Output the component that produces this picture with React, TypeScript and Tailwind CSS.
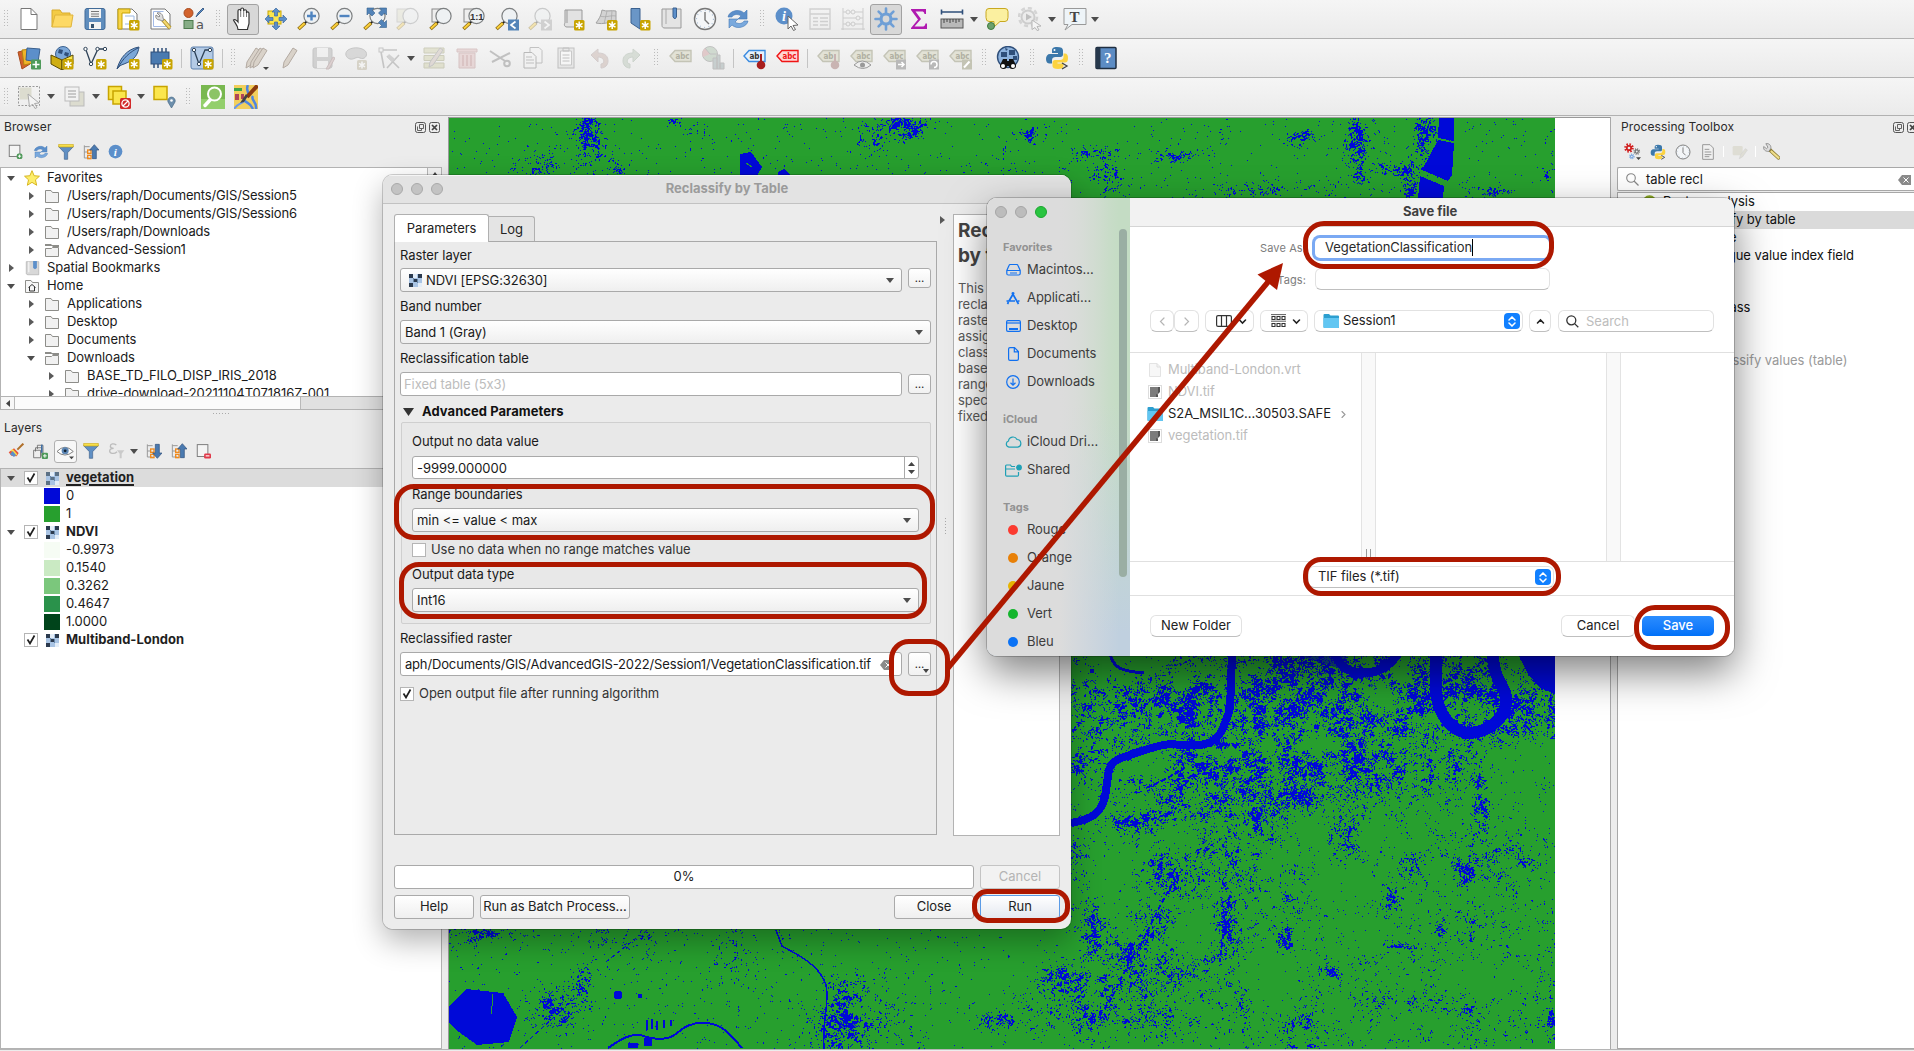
import React from "react";

/* ---------- small shared pieces ---------- */

type Kids = { children?: React.ReactNode };

const Svg = ({ children, s = 24, o = 1 }: Kids & { s?: number; o?: number }) => (
  <svg width={s} height={s} viewBox="0 0 24 24" fill="none" opacity={o} className="shrink-0">
    {children}
  </svg>
);

const Down = () => (
  <svg width="8" height="5" viewBox="0 0 8 5" className="shrink-0"><path d="M0 0h8L4 5z" fill="#4d4d4d" /></svg>
);
const RightTri = () => (
  <svg width="5" height="8" viewBox="0 0 5 8" className="shrink-0"><path d="M0 0v8l5-4z" fill="#5a5a5a" /></svg>
);

const NewBadge = () => (
  <g>
    <rect x="13" y="13" width="10.5" height="10.5" rx="1.5" fill="#c8a400" />
    <path d="M18.2 14.5v7.5M14.9 16.4l6.6 3.8M21.5 16.4l-6.6 3.8" stroke="#fff" strokeWidth="1.5" />
  </g>
);
const Lens = ({ children, fill = "#eef1f3" }: Kids & { fill?: string }) => (
  <g>
    <path d="M9.5 14.5L7.5 16.5" stroke="#222" strokeWidth="2" />
    <path d="M8 16l-6.5 6" stroke="#8a6a10" strokeWidth="3.6" />
    <path d="M7.7 16.3L2 21.6" stroke="#fcd03b" strokeWidth="2" />
    <circle cx="14.5" cy="9" r="7.6" fill={fill} stroke="#7c7f80" strokeWidth="1.2" />
    {children}
  </g>
);
const Refresh = ({ s = 24 }: { s?: number }) => (
  <Svg s={s}>
    <path d="M2 10c1-6 11-9 16-4l3-3v9h-9l3-3c-4-3-8-1-9 1z" fill="#5c8fca" stroke="#4478b5" strokeWidth=".6" />
    <path d="M22 14c-1 6-11 9-16 4l-3 3v-9h9l-3 3c4 3 8 1 9-1z" fill="#7aa9dd" stroke="#4478b5" strokeWidth=".6" />
  </Svg>
);
const Tag = ({ c = "#e2e2d6", b = "#c4c4b6", t = "#b0b0a2", children, text = "abc" }: Kids & { c?: string; b?: string; t?: string; text?: string }) => (
  <Svg>
    <path d="M2 10L7 4.500H23V15.500H7z" fill={c} stroke={b} strokeWidth="1.4" />
    <text x="7.500" y="13" fontSize="9" fontWeight="700" fill={t} fontFamily="DejaVu Sans" textLength={text.length > 2 ? 14 : 10} lengthAdjust="spacingAndGlyphs">{text}</text>
    {children}
  </Svg>
);
const Clock = ({ s = 24 }: { s?: number }) => (
  <Svg s={s}>
    <circle cx="12" cy="12" r="10.500" fill="#f4f6f8" stroke="#777" strokeWidth="1.4" />
    <path d="M12 5v8l4 4" stroke="#777" strokeWidth="1.4" />
    <circle cx="12" cy="12" r="8.500" stroke="#a9bdd3" strokeWidth="1.2" strokeDasharray="1 3.400" />
  </Svg>
);
const Python = ({ s = 24 }: { s?: number }) => (
  <Svg s={s}>
    <path d="M12 1c-4 0-5 1.500-5 3.500V7h6v1H5c-2.500 0-4 2-4 5s1.500 4.500 3.500 4.500H7V14c0-2 1.500-3 3.500-3h5c1.500 0 2.500-1 2.500-2.500v-4C18 2 16 1 12 1z" fill="#3c78aa" />
    <path d="M20 7.500h-1.500V11c0 2-1.500 3-3.500 3h-5C8.500 14 7.500 15 7.500 16.500V20c0 2 2 3 5.500 3s5.500-1 5.500-3v-2.500h-6v-1H20c2 0 3-1.500 3-4.500s-1-4.500-3-4.500z" fill="#fcd341" />
    <circle cx="9.500" cy="4" r="1" fill="#fff" />
    <path d="M17 17l5 3-5 3" stroke="#444" strokeWidth="1.300" />
  </Svg>
);
const GearShape = ({ x, y, r, c }: { x: number; y: number; r: number; c: string }) => (
  <g>
    <circle cx={x} cy={y} r={r} stroke={c} strokeWidth={r * 0.7} strokeDasharray={`${r * 0.4} ${r * 0.385}`} />
    <circle cx={x} cy={y} r={r * 0.62} stroke={c} strokeWidth={r * 0.5} />
  </g>
);
const Folder = () => (
  <svg width="14" height="13" viewBox="0 0 14 13" className="shrink-0">
    <path d="M.5 12.500V.5H6l1.500 2h6v10z" fill="#f1f1f1" stroke="#8d8d89" />
  </svg>
);
const FolderOpen = () => (
  <svg width="14" height="13" viewBox="0 0 14 13" className="shrink-0">
    <path d="M0 0h6l1 1h7v2H8L7 2H0z" fill="#8d8d89" />
    <path d="M.5 12.500V4.500H6.500l1-1h6v9z" fill="#f1f1f1" stroke="#8d8d89" />
  </svg>
);
const Raster = ({ dim = false }: { dim?: boolean }) => {
  const d = dim ? "#5b7085" : "#2b3a4e";
  return (
    <svg width="13" height="13" viewBox="0 0 13 13" className="shrink-0">
      <rect width="13" height="13" fill="#a9c4e4" />
      <path d="M0 0h4v4H0zM9 0h4v4H9zM5 5h3v3H5zM0 9h4v4H0z" fill={d} />
      <path d="M4 0h4v4H4zM9 9h4v4H9z" fill="#e3edf8" />
      <path d="M4 4h1v4H4zM8 5h1v4H8z" fill="#6a87a6" />
    </svg>
  );
};
const Check = ({ on = true }: { on?: boolean }) => (
  <span className="flex h-[14px] w-[14px] shrink-0 items-center justify-center border border-[#b5b5b5] bg-white">
    {on && <svg width="10" height="10" viewBox="0 0 10 10" fill="none"><path d="M1.500 4.500L4 8.500 8.500.5" stroke="#1f1f1f" strokeWidth="1.700" /></svg>}
  </span>
);

/* ---------- toolbar ---------- */

const Cell = ({ children, on = false }: Kids & { on?: boolean }) => (
  <div className="flex h-full w-[33px] shrink-0 items-center justify-center">
    {on ? <div className="flex h-[31px] w-[32px] shrink-0 items-center justify-center rounded-[3px] border border-[#a2a2a2] bg-[#d8d8d8]">{children}</div> : children}
  </div>
);
const Handle = ({ w = "w-[16px]" }: { w?: string }) => (
  <div className={`flex h-full shrink-0 items-center justify-center ${w}`}>
    <div className="h-[18px] w-[4px] bg-[repeating-linear-gradient(180deg,transparent_0_1px,#f0f0f0_1px_3px),repeating-linear-gradient(90deg,#bbb_0_1px,transparent_1px_3px)]" />
  </div>
);
const Sep = () => (
  <div className="flex h-full w-[8px] shrink-0 items-center justify-center"><div className="h-[19px] w-px bg-[#c4c4c4]" /></div>
);
const Arr = () => <div className="flex h-full w-[12px] shrink-0 items-center justify-center"><Down /></div>;
const bar = "flex h-[39px] shrink-0 items-center border-b border-[#b1b1b1] bg-gradient-to-b from-[#f5f5f5] to-[#ebebeb]";

const Pencil = ({ x = 0 }: { x?: number }) => (
  <path transform={`translate(${x} 0)`} d="M4 22l1-6L14 2l4 2.500L9 19z" fill="#d9d2c9" stroke="#b3aaa2" strokeWidth="1" />
);
const Needle = ({ c }: { c: string }) => (
  <g><path d="M19 8v10" stroke={c} strokeWidth="2" /><circle cx="19" cy="19" r="4.300" fill={c} /></g>
);

const RowOne = () => (
  <div className={bar}>
    <Handle w="w-[12px]" />
    <Cell><Svg><path d="M4 1.500h10l6 6v15H4z" fill="#fff" stroke="#777" /><path d="M14 1.500v6h6" stroke="#777" /></Svg></Cell>
    <Cell><Svg><path d="M2 20V3h8l2 3h8v4" fill="#f3cb45" stroke="#d9ab2c" /><path d="M2 20L5 8h18l-2 12z" fill="#fdd965" stroke="#e0b43a" /></Svg></Cell>
    <Cell><Svg><rect x="2" y="1.500" width="20" height="21" rx="2" fill="#5f8dbd" stroke="#426b98" /><path d="M6 2h12v9H6zM6 15h12v7H6z" fill="#f2f2f2" /><path d="M8 4.500h8M8 7h8M8 9.300h8" stroke="#777" /><path d="M8 17h3v4H8z" fill="#36536f" /></Svg></Cell>
    <Cell><Svg><path d="M2 2h14l5 5v15H2z" fill="#fff" stroke="#777" /><path d="M2 2h12v4H6v16H2z" fill="#f7d44a" stroke="#c8a400" /><path d="M9 9h9v8H9" stroke="#9bb8e0" /><NewBadge /></Svg></Cell>
    <Cell><Svg><path d="M2 2h14l5 5v15H2z" fill="#fff" stroke="#777" /><path d="M4.500 4.500h10M4.500 4.500v15h13" stroke="#a3bae6" /><path d="M14 13l7 8" stroke="#a98b25" strokeWidth="4" /><path d="M14 13l7 8" stroke="#f4d870" strokeWidth="2.400" /><path d="M8 6c3-1 6 1 6 5l1 2-2 1-2-1c-3 0-5-2-4-5l3 2 1-1z" fill="#ddd" stroke="#777" strokeWidth=".8" /></Svg></Cell>
    <Cell><Svg><circle cx="6.500" cy="6" r="4.500" fill="#d2622c" stroke="#a94a1d" /><path d="M14 10l2-4 5-5 1 1-5 5z" fill="#5c8fca" stroke="#42648d" /><rect x="2" y="13.500" width="9" height="8" fill="#86ad86" stroke="#4d7a4d" /><text x="14" y="22" fontSize="13" fill="#555" fontFamily="DejaVu Sans">a</text></Svg></Cell>
    <Handle />
    <Cell on><Svg><path d="M7 22.500c0-4-3-6-4.500-9.500 1-1 2.500-.5 4.500 2V4c0-2 2.500-2 2.700 0V2.500c.3-2 2.800-2 3 0V4c.3-1.700 2.600-1.700 2.800 0v2c.3-1.500 2.500-1.500 2.500.5V16c0 2.500-1.500 4-1.500 6.500z" fill="#fff" stroke="#333" strokeWidth="1.200" /><path d="M9.700 4v6M12.700 4v6M15.500 6v4" stroke="#555" strokeWidth=".8" /></Svg></Cell>
    <Cell><Svg><rect x="4" y="4" width="13" height="13" fill="#fbe64d" stroke="#c8a400" /><path d="M12 1l4 4h-2.500v4h-3V5H8zM12 23l4-4h-2.500v-4h-3v4H8zM1 12l4-4v2.500h4v3H5V16zM23 12l-4-4v2.500h-4v3h4V16z" fill="#5c8fca" stroke="#3e6a9e" strokeWidth=".7" /></Svg></Cell>
    <Cell><Svg><Lens><path d="M14.500 4.500v9M10 9h9" stroke="#4f84c0" strokeWidth="2.400" /></Lens></Svg></Cell>
    <Cell><Svg><Lens><path d="M9.500 9h10" stroke="#4f84c0" strokeWidth="2.400" /></Lens></Svg></Cell>
    <Cell><Svg><Lens /><path d="M4 1h7L9 3l3 3-3 3-3-3-2 2zM23.500 1v7l-2-2-3 3-3-3 3-3-2-2zM23.500 20.500h-7l2-2-3-3 3-3 3 3 2-2z" fill="#5283b8" stroke="#35618f" strokeWidth=".6" /></Svg></Cell>
    <Cell><Svg o={0.3}><rect x="1" y="2" width="13" height="13" fill="#dcdcc0" stroke="#999" /><Lens /></Svg></Cell>
    <Cell><Svg><rect x="3" y="2" width="13" height="13" fill="#eee" stroke="#888" /><Lens /></Svg></Cell>
    <Cell><Svg><rect x="2" y="2" width="13" height="13" fill="#eee" stroke="#888" /><Lens><text x="8" y="12.500" fontSize="9.500" fontWeight="700" fill="#333" fontFamily="Liberation Sans">1:1</text></Lens></Svg></Cell>
    <Cell><Svg><Lens /><rect x="13" y="12.500" width="11" height="11" fill="#5283b8" /><path d="M20.500 14.500l-4.500 3.500 4.500 3.500" stroke="#fff" strokeWidth="1.700" /></Svg></Cell>
    <Cell><Svg o={0.35}><Lens /><rect x="13" y="12.500" width="11" height="11" fill="#999" /><path d="M16.500 14.500l4.500 3.500-4.500 3.500" stroke="#fff" strokeWidth="1.700" /></Svg></Cell>
    <Cell><Svg><path d="M4 3h17v17H6c-3 0-3-3-2-4z" fill="#e2e2e2" stroke="#999" /><path d="M6 3v13" stroke="#999" /><NewBadge /></Svg></Cell>
    <Cell><Svg><path d="M8 3c5 2 9 0 14 1v12c-7-2-12 2-20 0C5 12 7 9 8 3z" fill="#d3d3d3" stroke="#a2a2a2" /><path d="M6 9c6 2 10-1 16 0M13 4l-3 13M18 4l-1 12" stroke="#aaa" strokeWidth=".8" /><NewBadge /></Svg></Cell>
    <Cell><Svg><path d="M4 1.500h9V22L4 16z" fill="#6a96c7" stroke="#3b618f" /><NewBadge /></Svg></Cell>
    <Cell><Svg><path d="M2 2h19v19H5c-3 0-3-2-3-3z" fill="#e4e4e4" stroke="#999" /><path d="M6 2v15" stroke="#aaa" /><path d="M13 1h3.500v9l-1.700 2-1.800-2z" fill="#5c8fca" stroke="#3b618f" /></Svg></Cell>
    <Cell><Clock /></Cell>
    <Cell><Refresh /></Cell>
    <Handle />
    <Cell><Svg><circle cx="9" cy="9" r="8.500" fill="#5c8fca" /><text x="7" y="14" fontSize="14" fontStyle="italic" fontWeight="700" fill="#fff" fontFamily="Liberation Serif">i</text><path d="M13 9l10 9-5 .5 2.500 4-2 1-2.500-4.500-3 3z" fill="#fff" stroke="#666" /></Svg></Cell>
    <Cell><Svg o={0.3}><path d="M2 2h20v20H2zM2 7h20M5 11h5M12 11h8M5 14.500h5M12 14.500h8M5 18h5M12 18h8" stroke="#888" strokeWidth="1.400" /></Svg></Cell>
    <Cell><Svg o={0.4}><path d="M2 1v22M22 1v22M2 5h20M2 11h20M2 17h20M0 22h24" stroke="#999" /><circle cx="7" cy="5" r="2" fill="#eee" stroke="#999" /><circle cx="12" cy="5" r="2" fill="#eee" stroke="#999" /><circle cx="17" cy="11" r="2" fill="#eee" stroke="#999" /><circle cx="7" cy="17" r="2" fill="#eee" stroke="#999" /><circle cx="12" cy="17" r="2" fill="#eee" stroke="#999" /></Svg></Cell>
    <Cell on><Svg><path d="M12 1.500V8M12 16v6.500M1.500 12H8M16 12h6.500M4.600 4.600L9 9M15 15l4.400 4.400M4.600 19.400L9 15M15 9l4.400-4.400" stroke="#6f9fd6" strokeWidth="2.600" strokeLinecap="round" /><circle cx="12" cy="12" r="5" fill="#d8d8d8" stroke="#6f9fd6" strokeWidth="3.200" /></Svg></Cell>
    <Cell><Svg><path d="M4 2h15v5h-1.500c-.5-2-1-2.500-3-2.500H8.500L14 12l-6.500 7.500H15c2 0 3-.5 3.500-3H20V22H4v-1l7-8.500L4 3z" fill="#b01ab0" /></Svg></Cell>
    <Cell><Svg><path d="M1 5h22M1.500 2.500v5M22.500 2.500v5" stroke="#2f4f7a" strokeWidth="1.600" /><rect x="1" y="12" width="22" height="9" fill="#b9b9b9" stroke="#555" /><path d="M4 12v4M7 12v3M10 12v4M13 12v3M16 12v4M19 12v3" stroke="#444" /></Svg></Cell>
    <Arr />
    <Cell><Svg><path d="M4 1.500h16q3 0 3 3v6q0 4-3 4h-5L9 20v-5.500H4q-3 0-3-4v-6q0-3 3-3z" fill="#fbf0a0" stroke="#c8a820" /><circle cx="6" cy="19" r="3.500" fill="#6ca06c" stroke="#3c7a3c" /></Svg></Cell>
    <Cell><Svg o={0.4}><circle cx="10" cy="10" r="9" stroke="#aaa" strokeWidth="2.500" strokeDasharray="4 3" /><circle cx="10" cy="10" r="6.500" fill="#e6e6e6" stroke="#999" strokeWidth="2" /><path d="M8 6.500l6 3.500-6 3.500z" fill="#777" /><path d="M14 13l9 6-4 .5 2 3.500-2 .5-2-3-3 2z" fill="#fff" stroke="#666" /></Svg></Cell>
    <Arr />
    <Cell><Svg><path d="M1 1.500h22v16H9L2 23l3-5.500H1z" fill="#eef4f8" stroke="#999" /><text x="6.500" y="14.500" fontSize="15" fontWeight="700" fill="#444" fontFamily="Liberation Serif">T</text></Svg></Cell>
    <div className="-ml-[2px] h-full"><Arr /></div>
  </div>
);

const RowTwo = () => (
  <div className={bar}>
    <Handle w="w-[12px]" />
    <Cell><Svg><path d="M1 6l9-2 3 14-8 5z" fill="#d2622c" stroke="#a94a1d" /><path d="M5 4l10-1 1 14-9 2z" fill="#f0b429" stroke="#b58510" /><path d="M10 2l13 1-2 13-12-2z" fill="#5c8fca" stroke="#3b618f" /><rect x="14" y="13.500" width="10" height="10" rx="1" fill="#4f9a5a" /><path d="M19 15v7M15.500 18.500h7" stroke="#fff" strokeWidth="1.600" /></Svg></Cell>
    <Cell><Svg><circle cx="13" cy="8" r="7.500" fill="#7ba7d8" stroke="#3b618f" /><path d="M9 3l4 1-1 4-4-1zM15 6l4 1-1 4-4-2z" fill="#2f4f7a" /><path d="M1 9l11 5v10L1 18z" fill="#cfae12" stroke="#5a4a00" /><path d="M12 14l11-5v9l-11 6z" fill="#fbe64d" stroke="#5a4a00" /><NewBadge /></Svg></Cell>
    <Cell><Svg><path d="M3 4l5 14L15 3h7" stroke="#2f4358" strokeWidth="1.300" /><g fill="#fff" stroke="#2f4358"><circle cx="2.500" cy="3" r="1.700" /><circle cx="14.500" cy="3" r="1.700" /><circle cx="22" cy="3" r="1.700" /><circle cx="8" cy="18" r="1.700" /></g><NewBadge /></Svg></Cell>
    <Cell><Svg><path d="M1 23C4 12 11 3 23 1c-1 7-4 13-15 17-3 1-5 2-7 5z" fill="#7ba7d8" stroke="#2f4f7a" /><path d="M2 22C7 12 14 6 22 2" stroke="#2f4f7a" /><NewBadge /></Svg></Cell>
    <Cell><Svg><rect x="2" y="6" width="18" height="12" fill="#4a7ab0" stroke="#2f4f7a" /><path d="M5 2v4M9 2v4M13 2v4M17 2v4M5 18v4M9 18v4" stroke="#2f4f7a" strokeWidth="1.500" /><NewBadge /></Svg></Cell>
    <Sep />
    <Cell><Svg><rect x="1" y="1" width="22" height="22" rx="2" fill="#b4cbe6" stroke="#5c80ad" /><path d="M4 4l5 14L15 4h5" stroke="#2f4358" strokeWidth="1.300" /><circle cx="9" cy="18" r="1.700" fill="#fff" stroke="#2f4358" /><circle cx="4" cy="4" r="1.700" fill="#fff" stroke="#2f4358" /><circle cx="20" cy="4" r="1.700" fill="#fff" stroke="#2f4358" /><NewBadge /></Svg></Cell>
    <Sep />
    <Handle w="w-[14px]" />
    <Cell><Svg><Pencil x={-3} /><Pencil x={1} /><Pencil x={4} /><path d="M18 21h6l-3 3z" fill="#444" /></Svg></Cell>
    <Cell><Svg><Pencil x={1} /></Svg></Cell>
    <Cell><Svg o={0.35}><rect x="2" y="2" width="19" height="20" rx="2" fill="#999" stroke="#777" /><path d="M6 2h11v9H6zM6 15h11v7H6z" fill="#eee" /><path d="M15 23l7-12 2 1-6 11z" fill="#b99" stroke="#866" /></Svg></Cell>
    <Cell><Svg o={0.35}><path d="M4 4c6-4 16-2 18 2s-2 8-6 6-6 2-10 1-6-6-2-9z" fill="#aaa" stroke="#777" /><rect x="13" y="14" width="10" height="10" rx="1.500" fill="#aaa080" /><path d="M18 15.500v7M15 17.300l6 3.500M21 17.300l-6 3.500" stroke="#fff" strokeWidth="1.500" /></Svg></Cell>
    <Cell><Svg o={0.35}><path d="M6 4h14M4 6l3 16M10 22L22 9M10 10l12 12" stroke="#777" strokeWidth="1.600" /><rect x="2" y="2" width="4" height="4" fill="#eee" stroke="#777" /><path d="M12 8l6 5-3 3-5-5z" fill="#999" /></Svg></Cell>
    <Arr />
    <Cell><Svg o={0.4}><path d="M2 2h20v5H2zM2 9.500h20v5H2zM2 17h20v5H2z" fill="#cccca0" stroke="#999970" /><path d="M7 21l1-5L18 2l3 2L11 19z" fill="#c9b9b0" stroke="#888" /></Svg></Cell>
    <Cell><Svg o={0.35}><path d="M4 7h16v15H4zM2 3h20v3H2z" fill="#d8aaaa" stroke="#a77" /><path d="M8 9v11M12 9v11M16 9v11" stroke="#a66" strokeWidth="1.500" /></Svg></Cell>
    <Cell><Svg o={0.45}><path d="M2 5l15 10M4 16L22 7" stroke="#888" strokeWidth="2" /><circle cx="19" cy="17.500" r="2.800" stroke="#888" strokeWidth="2" /></Svg></Cell>
    <Cell><Svg o={0.45}><path d="M9 1.500h9l3 3V17H9z" fill="#f4f4f4" stroke="#888" /><path d="M3 6.500h8l4 4V22H3z" fill="#f4f4f4" stroke="#777" /><path d="M5 11h6M5 14h8M5 17h8" stroke="#888" /></Svg></Cell>
    <Cell><Svg o={0.45}><rect x="4" y="2" width="16" height="20" fill="#ddd" stroke="#888" /><path d="M6.500 5h11v14h-11z" fill="#fff" stroke="#999" /><path d="M8.500 9h7M8.500 12h7M8.500 15h7M9 2h6v3H9z" stroke="#888" /></Svg></Cell>
    <Cell><Svg o={0.4}><path d="M4 9l7-6v4c8 0 10 4 10 8s-3 7-7 7v-4c4 0 4-7-3-7v5z" fill="#c0a89f" stroke="#a99" /></Svg></Cell>
    <Cell><Svg o={0.4}><path d="M20 9l-7-6v4C5 7 3 11 3 15s3 7 7 7v-4c-4 0-4-7 3-7v5z" fill="#b2c0b0" stroke="#9a9" /></Svg></Cell>
    <Handle w="w-[15px]" />
    <Cell><Tag /></Cell>
    <Cell><Svg o={0.45}><circle cx="9" cy="8" r="7.500" fill="#a9bfa9" stroke="#888" /><path d="M9 8L4 2A8 8 0 0 0 2 11z" fill="#c99" /><path d="M9 8h7.500M9 8L4 2" stroke="#888" /><path d="M12 12h4v11h-4zM16 9h3v14h-3zM19 17h4v6h-4z" fill="#99a9a9" stroke="#888" /></Svg></Cell>
    <Sep />
    <Cell><Tag c="#e6f1fc" b="#3a8be0" t="#333" text="ab"><Needle c="#a81e1e" /></Tag></Cell>
    <Cell><Tag c="#ffd6d6" b="#f01414" t="#f01414" /></Cell>
    <Sep />
    <Cell><Tag text="ab"><Needle c="#c9b4b2" /></Tag></Cell>
    <Cell><Tag><path d="M5 19q8-8 17 0q-8 7-17 0z" fill="#eee" stroke="#999" /><circle cx="13.500" cy="19" r="2.500" fill="#999" /></Tag></Cell>
    <Cell><Tag><rect x="14" y="13.500" width="10" height="10" fill="#b9b9b9" /><path d="M16 18.500h6M19.500 16l2.500 2.500-2.500 2.500" stroke="#fff" strokeWidth="1.500" /></Tag></Cell>
    <Cell><Tag><rect x="14" y="13.500" width="10" height="10" fill="#b9b9b9" /><path d="M19 21.500a3 3 0 1 0-3-3" stroke="#fff" strokeWidth="1.500" /></Tag></Cell>
    <Cell><Tag><rect x="14" y="13.500" width="10" height="10" fill="#c4c4b4" /><path d="M16 21.500l5.500-6" stroke="#fff" strokeWidth="2" /></Tag></Cell>
    <Handle w="w-[15px]" />
    <Cell><Svg><circle cx="12" cy="11" r="10.500" fill="#8db2dd" stroke="#2f4f7a" strokeWidth="1.400" /><path d="M5 6h6v5H5zM13 4h6v5h-6zM9 2l3 1-2 2zM17 10h4v4h-4z" fill="#2f4f7a" /><path d="M7 13h4v2h2v-2h4l3 6a3.500 3.500 0 1 1-7 1h-2a3.500 3.500 0 1 1-7-1z" fill="#111" /><circle cx="7" cy="20" r="2" fill="#fff" /><circle cx="17" cy="20" r="2" fill="#fff" /></Svg></Cell>
    <Handle />
    <Cell><Python /></Cell>
    <Handle />
    <Cell><Svg><rect x="2" y="1.500" width="20" height="21" rx="1" fill="#5c8cc4" stroke="#1f2e40" strokeWidth="1.500" /><path d="M2 2h4.500v20H2z" fill="#26384c" /><text x="10" y="17" fontSize="15" fill="#fff" fontFamily="Liberation Serif" fontWeight="700">?</text></Svg></Cell>
  </div>
);

const RowThree = () => (
  <div className="flex h-[38px] shrink-0 items-center border-b border-[#b1b1b1] bg-gradient-to-b from-[#f5f5f5] to-[#ebebeb]">
    <Handle w="w-[12px]" />
    <Cell><Svg><rect x="1.500" y="1.500" width="21" height="19" stroke="#999" strokeDasharray="2 1.500" /><rect x="2.500" y="2.500" width="12" height="12" fill="#dcdccf" /><path d="M11 9l11 9-4.500.5 2.500 4-2 1-2.500-4.500L12.500 22z" fill="#f4f4f4" stroke="#aaa" /></Svg></Cell>
    <Arr />
    <Cell><Svg><rect x="8" y="7" width="14" height="14" fill="#dcdccf" stroke="#bbb" /><rect x="3" y="2" width="14" height="14" fill="#f2f2f2" stroke="#bbb" /><path d="M6 6h8M6 9h8M6 12h8" stroke="#bbb" strokeWidth="1.300" /></Svg></Cell>
    <Arr />
    <Cell><Svg><rect x="1.500" y="1.500" width="13" height="13" fill="#fbe64d" stroke="#c8a400" strokeWidth="1.500" /><rect x="6" y="6" width="13" height="13" fill="#fbe64d" stroke="#c8a400" strokeWidth="1.500" /><rect x="13" y="13" width="11" height="11" rx="1.500" fill="#d22a2a" /><circle cx="18.500" cy="18.500" r="3.600" stroke="#fff" strokeWidth="1.300" /><path d="M16 21l5-5" stroke="#fff" strokeWidth="1.300" /></Svg></Cell>
    <Arr />
    <Cell><Svg><rect x="2" y="1.500" width="13" height="13" fill="#fbe64d" stroke="#c8a400" strokeWidth="1.500" /><path d="M19.500 23l-3.500-6a3.700 3.700 0 1 1 7 0z" fill="#6d8fac" stroke="#486a86" strokeWidth=".7" /><circle cx="19.500" cy="15.500" r="1.300" fill="#fff" /></Svg></Cell>
    <Handle />
    <Cell><Svg><rect width="24" height="24" fill="#79b850" /><rect y="14" width="24" height="10" fill="#93cf6c" /><path d="M9.500 14.500L4 20.500" stroke="#fff" strokeWidth="3.500" strokeLinecap="round" /><circle cx="13.500" cy="9" r="6.500" fill="#8cc465" stroke="#fff" strokeWidth="2" /></Svg></Cell>
    <Cell><Svg><rect width="24" height="24" fill="#f3cf5c" /><path d="M0 3h8v3H0z" fill="#3fa54a" /><path d="M1 9h4v6H1zM7 9h3v5H7z" fill="#b0455a" /><path d="M14 0c-3 5 2 7 0 12M10 15c3 4 6 2 9 9M19 11c-3 4 4 5 3 13" stroke="#4f86e0" strokeWidth="2.500" /><path d="M0 24c4-6 8-5 10-8" stroke="#6b98ea" strokeWidth="2" /><path d="M23.500.5L13 12" stroke="#8a3a10" strokeWidth="4" /><path d="M14 11l-4 6-4 1 2-3 4-6z" fill="#444" /></Svg></Cell>
  </div>
);

/* ---------- dock panels ---------- */

const DockTitle = ({ children, cls }: Kids & { cls: string }) => (
  <div className={`flex shrink-0 items-center justify-between text-[12px] text-[#2a2a2a] ${cls}`}>
    <span className="whitespace-nowrap tracking-[0.100px]">{children}</span>
  </div>
);
const DockButtons = () => (
  <span className="flex shrink-0 gap-[3px]">
    <svg width="11" height="11" viewBox="0 0 11 11" fill="none"><rect x=".5" y=".5" width="10" height="10" rx="2" stroke="#555" /><path d="M4.500 2.500h4v4h-4zM2.500 4.500v4h4v-2" stroke="#555" strokeWidth=".9" /></svg>
    <svg width="11" height="11" viewBox="0 0 11 11" fill="none"><rect x=".5" y=".5" width="10" height="10" rx="2" stroke="#555" /><path d="M3 3l5 5M8 3l-5 5" stroke="#444" strokeWidth="1.700" /></svg>
  </span>
);
const Mini = ({ children, w = "w-[25px]" }: Kids & { w?: string }) => (
  <div className={`flex h-[24px] shrink-0 items-center justify-center ${w}`}>{children}</div>
);
const Funnel = () => (
  <Svg s={16}><path d="M1 4h22l-8.500 9v10h-5V13z" fill="#5f8fc4" stroke="#42648d" /><path d="M1 .5h22v4H1z" fill="#f7df4a" stroke="#c8a820" /></Svg>
);
const TreeIcon = ({ up }: { up: boolean }) => (
  <Svg s={16}>
    <path d="M2 2v19h8M2 4h8M2 12h5" stroke="#999" strokeWidth="1.500" />
    <rect x="7" y="9" width="5" height="5" stroke="#f08a1c" strokeWidth="2" /><rect x="7" y="17" width="5" height="5" stroke="#f08a1c" strokeWidth="2" />
    <path d={up ? "M17 1l7 8h-4v13h-6V9h-4z" : "M17 23l7-8h-4V2h-6v13h-4z"} fill="#4a7ab0" stroke="#2f4f7a" />
  </Svg>
);

type Node = { l: number; t: string; open?: boolean; tight?: boolean; icon: React.ReactNode };
const star = <svg width="16" height="16" viewBox="0 0 24 24" className="shrink-0"><path d="M12 1l3.200 7.600 8 .7-6 5.400 1.800 8.200L12 18.500 5 22.900l1.800-8.200-6-5.400 8-.7z" fill="#fdee6a" stroke="#d8b620" strokeWidth="1.500" /></svg>;
const book = <Svg s={15}><path d="M2 1h20v21H5c-3 0-3-2-3-3z" fill="#d8d8d8" stroke="#aaa" /><path d="M6 1v17" stroke="#f4f4f4" strokeWidth="2" /><path d="M13 0h6v11l-3 2-3-2z" fill="#5c8fca" /></Svg>;
const home = <svg width="14" height="13" viewBox="0 0 14 13" fill="none" className="shrink-0"><path d="M.5 12.500V.5H6l1.500 2h6v10z" fill="#f6f6f6" stroke="#8d8d89" /><path d="M3.500 7.500L7 4.500l3.500 3M4.500 7v4h5V7" stroke="#333" /></svg>;
const nodes: Node[] = [
  { l: 0, t: "Favorites", open: true, icon: star },
  { l: 1, t: "/Users/raph/Documents/GIS/Session5", tight: true, icon: <Folder /> },
  { l: 1, t: "/Users/raph/Documents/GIS/Session6", tight: true, icon: <Folder /> },
  { l: 1, t: "/Users/raph/Downloads", tight: true, icon: <Folder /> },
  { l: 1, t: "Advanced-Session1", tight: true, icon: <FolderOpen /> },
  { l: 0, t: "Spatial Bookmarks", icon: book },
  { l: 0, t: "Home", open: true, icon: home },
  { l: 1, t: "Applications", icon: <Folder /> },
  { l: 1, t: "Desktop", icon: <Folder /> },
  { l: 1, t: "Documents", icon: <Folder /> },
  { l: 1, t: "Downloads", open: true, icon: <FolderOpen /> },
  { l: 2, t: "BASE_TD_FILO_DISP_IRIS_2018", icon: <Folder /> },
  { l: 2, t: "drive-download-20211104T071816Z-001", icon: <Folder /> },
];
const indent = ["pl-[5px]", "pl-[25px]", "pl-[45px]"];

const BrowserPanel = () => (
  <div className="flex h-[293px] shrink-0 flex-col">
    <div className="flex h-[21px] shrink-0 items-center justify-between pb-px pl-[4px] pr-[2px]">
      <DockTitle cls="">Browser</DockTitle>
      <DockButtons />
    </div>
    <div className="flex h-[29px] shrink-0 items-center pb-[2px] pl-[3px]">
      <Mini><Svg s={15}><rect x="2" y="2" width="17" height="18" fill="#f4f4f4" stroke="#777" strokeWidth="1.500" /><rect x="14" y="15" width="9" height="9" rx="3" fill="#4f9a5a" /><path d="M18.500 17v5M16 19.500h5" stroke="#fff" strokeWidth="1.500" /></Svg></Mini>
      <Mini><Refresh s={16} /></Mini>
      <Mini><Funnel /></Mini>
      <Mini><TreeIcon up /></Mini>
      <Mini><Svg s={15}><circle cx="12" cy="12" r="11" fill="#5c8fca" /><text x="9" y="18.500" fontSize="18" fontStyle="italic" fontWeight="700" fill="#fff" fontFamily="Liberation Serif">i</text></Svg></Mini>
    </div>
    <div className="flex h-[229px] shrink-0 border border-b-0 border-[#b3b3b3] bg-white">
      <div className="flex flex-1 flex-col overflow-hidden pt-[1px]">
        {nodes.map((n) => (
          <div key={n.t} className={`flex h-[18px] shrink-0 items-center whitespace-nowrap text-[13px] text-[#1a1a1a] ${indent[n.l]} ${n.tight ? "tracking-[-0.150px]" : ""}`}>
            <span className="flex w-[10px] shrink-0 justify-center">{n.open ? <Down /> : <RightTri />}</span>
            <span className="ml-[7px] flex w-[18px] shrink-0 justify-center">{n.icon}</span>
            <span className="ml-[6px]">{n.t}</span>
          </div>
        ))}
      </div>
      <div className="flex w-[14px] shrink-0 justify-center border-l border-[#b9b9b9] bg-[#f4f4f4] pt-[4px]">
        <svg width="6" height="4" viewBox="0 0 6 4"><path d="M0 4h6L3 0z" fill="#444" /></svg>
      </div>
    </div>
    <div className="flex h-[14px] shrink-0 border border-[#b3b3b3] bg-[#e1e1e1]">
      <div className="flex w-[14px] items-center justify-center border-r border-[#b9b9b9] bg-[#f7f7f7]"><svg width="4" height="7" viewBox="0 0 4 7"><path d="M4 0v7L0 3.500z" fill="#444" /></svg></div>
      <div className="w-[286px] border-r border-[#b9b9b9] bg-[#fbfbfb]" />
    </div>
  </div>
);

const Legend = ({ sw, t }: { sw: string; t: string }) => (
  <div className="flex h-[18px] shrink-0 items-center pl-[43px] text-[13px] text-[#1a1a1a]">
    <span className={`h-[16px] w-[16px] ${sw}`} /><span className="ml-[6px]">{t}</span>
  </div>
);
const Layer = ({ t, arrow = true, sel = false }: { t: string; arrow?: boolean; sel?: boolean }) => (
  <div className={`flex h-[18px] shrink-0 items-center pl-[5px] text-[13px] font-bold tracking-normal text-[#1f1f1f] ${sel ? "bg-[#dcdcdc]" : ""}`}>
    <span className="flex w-[10px] justify-center">{arrow && <Down />}</span>
    <span className="ml-[8px]"><Check /></span>
    <span className="ml-[8px]"><Raster dim={sel} /></span>
    <span className={`ml-[7px] ${sel ? "underline decoration-[1.500px] underline-offset-[2px]" : ""}`}>{t}</span>
  </div>
);

const LayersPanel = () => (
  <div className="flex flex-1 flex-col">
    <div className="flex h-[7px] shrink-0 items-center justify-center"><div className="h-px w-[17px] bg-[repeating-linear-gradient(90deg,#aaa_0_1px,transparent_1px_3px)]" /></div>
    <div className="flex h-[21px] shrink-0 items-center pl-[4px]"><DockTitle cls="">Layers</DockTitle></div>
    <div className="flex h-[30px] shrink-0 items-center pb-[4px] pl-[3px]">
      <Mini><Svg s={16}><path d="M23 1l-9 9" stroke="#b0702a" strokeWidth="3" /><path d="M9 8l7 7-3 5-8-1-4-5z" fill="#e9553b" /><path d="M4 11l8 8 2-2-7-8z" fill="#f7df4a" /><path d="M3 17l4-5 5 6-3 3z" fill="#5c8fca" /></Svg></Mini>
      <Mini><Svg s={15}><path d="M7 8V2h9v14M4 12V6h10v14M1 10h11v12H1z" fill="#eee" stroke="#666" strokeWidth="1.300" /><path d="M14 1v13" stroke="#3f6fa5" strokeWidth="2.500" /><rect x="14" y="14" width="10" height="10" rx="2" fill="#4f9a5a" /><path d="M19 16v6M16 19h6" stroke="#fff" strokeWidth="1.500" /></Svg></Mini>
      <div className="mx-[1px] flex h-[23px] w-[23px] items-center justify-center rounded-[3px] border border-[#b0b0b0] bg-[#f7f7f7]"><Svg s={17}><path d="M0 12Q11 0 23 12Q11 22 0 12z" fill="#fff" stroke="#777" strokeWidth="1.300" /><circle cx="11.500" cy="11" r="5" fill="#5c86b4" /><circle cx="11.500" cy="11" r="2" fill="#123" /><path d="M17 19h7l-3.500 4z" fill="#444" /></Svg></div>
      <Mini><Funnel /></Mini>
      <Mini w="w-[27px]"><Svg s={16} o={0.4}><path d="M11 3C7 0 2 1 2 5c0 2 2 3 5 3-4 0-6 2-6 4 0 4 7 5 11 1" stroke="#777" strokeWidth="2" /><path d="M12 11h11l-4 5v7h-3v-7z" fill="#999" /></Svg></Mini>
      <span className="flex w-[8px] justify-center"><Down /></span>
      <Mini w="w-[31px]"><TreeIcon up={false} /></Mini>
      <Mini w="w-[20px]"><TreeIcon up /></Mini>
      <Mini w="w-[29px]"><Svg s={15}><rect x="2" y="1" width="17" height="19" fill="#f4f4f4" stroke="#777" strokeWidth="1.500" /><rect x="13" y="15" width="11" height="8" rx="2" fill="#e03a4a" /><path d="M15.500 19h6" stroke="#fff" strokeWidth="1.800" /></Svg></Mini>
    </div>
    <div className="flex flex-1 flex-col border border-[#b3b3b3] bg-white">
      <Layer t="vegetation" sel />
      <Legend sw="bg-[#0009d8]" t="0" />
      <Legend sw="bg-[#279f2e]" t="1" />
      <Layer t="NDVI" />
      <Legend sw="bg-[#f6fcf4]" t="-0.9973" />
      <Legend sw="bg-[#caeac3]" t="0.1540" />
      <Legend sw="bg-[#7bc77c]" t="0.3262" />
      <Legend sw="bg-[#2a924b]" t="0.4647" />
      <Legend sw="bg-[#00441b]" t="1.0000" />
      <Layer t="Multiband-London" arrow={false} />
    </div>
  </div>
);

const ToolboxPanel = () => (
  <div className="flex w-[297px] shrink-0 flex-col overflow-hidden">
    <div className="flex h-[21px] shrink-0 items-center pb-px pl-[4px]">
      <DockTitle cls="w-[272px]">Processing Toolbox</DockTitle>
      <DockButtons />
    </div>
    <div className="flex h-[29px] shrink-0 items-center pb-[2px] pl-[3px]">
      <Mini><Svg s={17}><GearShape x={7} y={7} r={5} c="#d11f1f" /><GearShape x={18} y={12} r={3.5} c="#777" /><GearShape x={11} y={19} r={3} c="#7fa9e0" /><path d="M17 20h7l-3.500 4z" fill="#444" /></Svg></Mini>
      <Mini><Python s={16} /></Mini>
      <Mini><Clock s={16} /></Mini>
      <Mini><Svg s={16}><path d="M4 1h11l5 5v17H4z" fill="#f0f0f0" stroke="#999" strokeWidth="1.500" /><path d="M7 8h7M7 12h10M7 16h10M7 19h7" stroke="#999" strokeWidth="1.500" /></Svg></Mini>
      <div className="mx-[3px] h-[11px] w-px bg-white" />
      <Mini><Svg s={16} o={0.5}><rect x="1" y="3" width="15" height="14" rx="2" fill="#d2d0bd" /><path d="M11 22l2-6 7-9 3 2-7 10z" fill="#d2d0bd" stroke="#bbb" /></Svg></Mini>
      <div className="mx-[3px] h-[11px] w-px bg-white" />
      <Mini><Svg s={17}><path d="M9 9l13 12" stroke="#8a7a30" strokeWidth="5" strokeLinecap="round" /><path d="M12 12l10 9" stroke="#f0de8a" strokeWidth="3" strokeLinecap="round" /><path d="M4 1c4-1 8 2 7 7l-3 4C3 12 0 9 1 5l4 3 2-2z" fill="#ddd" stroke="#777" /></Svg></Mini>
    </div>
    <div className="flex h-[24px] shrink-0 items-center rounded-l-[2px] border border-r-0 border-[#a8a8a8] bg-white pl-[8px] pr-[3px] pt-px text-[13px] text-[#1a1a1a]">
      <svg width="13" height="13" viewBox="0 0 13 13" fill="none"><circle cx="5" cy="5" r="4.300" stroke="#888" strokeWidth="1.100" /><path d="M8 8l4.500 4.500" stroke="#888" strokeWidth="1.300" /></svg>
      <span className="ml-[7px] flex-1 tracking-normal">table recl</span>
      <svg width="13" height="10" viewBox="0 0 13 10" fill="none"><path d="M0 5l4-5h9v10H4z" fill="#8a8a8a" /><path d="M5.500 2.500l5 5M10.500 2.500l-5 5" stroke="#fff" /></svg>
    </div>
    <div className="mt-px flex flex-1 flex-col whitespace-nowrap border border-r-0 border-[#a8a8a8] bg-white text-[13px] tracking-[-0.040px] text-[#111]">
      <div className="flex h-[18px] shrink-0 items-center pl-[24px]"><Svg s={15}><circle cx="12" cy="12" r="9" stroke="#8aa823" strokeWidth="5" /></Svg><span className="ml-[6px]">Raster analysis</span></div>
      <div className="flex h-[18px] shrink-0 items-center bg-[#dadada] pl-[63px]">Reclassify by table</div>
      <div className="flex h-[18px] shrink-0 items-center pl-[45px]">Vector table</div>
      <div className="flex h-[18px] shrink-0 items-center pl-[63px]">Add unique value index field</div>
      <div className="flex h-[18px] shrink-0 items-center pl-[45px]">GRASS</div>
      <div className="flex h-[17px] shrink-0 items-center pl-[45px]">Raster</div>
      <div className="flex h-[16px] shrink-0 items-center pl-[81px]">r.reclass</div>
      <div className="flex h-[18px] shrink-0 items-center pl-[45px]">SAGA</div>
      <div className="flex h-[18px] shrink-0 items-center pl-[45px] text-transparent">Raster</div>
      <div className="flex h-[18px] shrink-0 items-center pl-[81px] text-[#9a9a9a]">Reclassify values (table)</div>
    </div>
  </div>
);

/* ---------- classified raster ---------- */

const MX = 449, MY = 118, MR = 1555;

function hash(x: number, y: number, s: number) {
  let h = Math.imul(x, 374761393) ^ Math.imul(y, 668265263) ^ Math.imul(s, 1442695041);
  h = Math.imul(h ^ (h >>> 13), 1274126177);
  h ^= h >>> 16;
  return (h >>> 0) / 4294967296;
}
function noise(x: number, y: number, s: number) {
  const xi = Math.floor(x), yi = Math.floor(y);
  const fx = x - xi, fy = y - yi;
  const u = fx * fx * (3 - 2 * fx), v = fy * fy * (3 - 2 * fy);
  const a = hash(xi, yi, s), b = hash(xi + 1, yi, s), c = hash(xi, yi + 1, s), d = hash(xi + 1, yi + 1, s);
  return a + (b - a) * u + (c - a) * v + (a - b - c + d) * u * v;
}
/* urban density patches: centre x, centre y, radius x, radius y, weight */
const patches: number[][] = [
  [1171, 706, 60, 26, 0.55], [1130, 700, 60, 26, 0.2], [1198, 768, 24, 12, 0.4], [1284, 693, 80, 40, 0.4],
  [1340, 662, 60, 14, 0.5], [1400, 700, 70, 40, 0.22], [1474, 690, 24, 26, 0.35], [1520, 715, 40, 22, 0.35],
  [1270, 765, 90, 34, 0.2], [1390, 765, 60, 30, 0.18], [1448, 766, 26, 6, 0.45], [1478, 803, 8, 20, 0.5],
  [1200, 800, 60, 24, 0.18], [1254, 820, 10, 8, 0.5], [1128, 823, 22, 6, 0.45], [1298, 796, 14, 7, 0.4],
  [1354, 786, 12, 14, 0.35], [1344, 843, 12, 18, 0.3], [1240, 850, 40, 26, 0.13], [1077, 770, 14, 14, 0.35],
  [1078, 852, 9, 8, 0.5], [1160, 862, 22, 16, 0.22], [1171, 888, 12, 14, 0.45], [1151, 922, 12, 12, 0.35],
  [1131, 949, 18, 12, 0.55], [1094, 935, 10, 24, 0.42], [1226, 915, 4, 32, 0.5], [1233, 925, 24, 45, 0.1],
  [1188, 966, 44, 18, 0.16], [1094, 1014, 9, 9, 0.5], [1110, 995, 8, 18, 0.3], [1085, 985, 25, 20, 0.15],
  [1284, 939, 6, 11, 0.5], [1334, 970, 9, 6, 0.5], [1438, 926, 5, 8, 0.5], [1404, 946, 15, 2, 0.6],
  [1468, 869, 10, 14, 0.5], [1501, 856, 38, 22, 0.13], [1418, 865, 14, 8, 0.25], [1392, 898, 6, 10, 0.3],
  [1411, 1003, 28, 8, 0.22], [1458, 1009, 14, 5, 0.35], [1141, 1023, 14, 9, 0.25], [1241, 1009, 6, 14, 0.35],
  [1304, 1023, 22, 10, 0.13], [1551, 1019, 3, 12, 0.7], [1300, 1046, 10, 2, 0.6], [1351, 1042, 4, 5, 0.5],
  [1150, 1000, 50, 30, 0.07], [1470, 925, 8, 16, 0.25], [1290, 890, 30, 24, 0.05],
  [1055, 978, 14, 9, 0.4], [1050, 1010, 50, 18, 0.06], [840, 1020, 18, 24, 0.4], [860, 1018, 40, 32, 0.1],
  [480, 932, 45, 10, 0.12], [475, 932, 8, 6, 0.5], [545, 1005, 16, 14, 0.28], [730, 948, 18, 26, 0.09],
  [630, 940, 40, 14, 0.08], [582, 985, 7, 24, 0.25], [560, 1010, 10, 16, 0.25], [1000, 1022, 16, 6, 0.3],
  [588, 135, 9, 20, 0.6], [592, 155, 8, 10, 0.5], [545, 168, 28, 12, 0.3], [618, 168, 7, 12, 0.35],
  [905, 126, 18, 10, 0.5], [868, 138, 12, 12, 0.32], [672, 120, 6, 4, 0.6], [700, 133, 12, 10, 0.16],
  [785, 130, 4, 5, 0.3], [1030, 135, 10, 8, 0.3], [1002, 152, 5, 5, 0.3], [1092, 153, 14, 5, 0.38],
  [1110, 180, 14, 12, 0.2], [1175, 157, 20, 6, 0.2], [1303, 138, 10, 6, 0.5], [1355, 138, 8, 26, 0.45],
  [1372, 165, 16, 16, 0.3], [1424, 130, 8, 18, 0.6], [1408, 172, 12, 10, 0.32], [1410, 190, 5, 8, 0.5],
  [1250, 190, 110, 10, 0.05], [1490, 192, 20, 6, 0.12], [1545, 176, 3, 4, 0.6],
];
/* open green areas that thin the speckle out */
const parks: number[][] = [
  [1112, 668, 38, 14], [1145, 666, 18, 12], [1182, 678, 13, 14], [1203, 668, 12, 7], [1154, 766, 19, 14],
  [1381, 696, 13, 16], [1321, 743, 24, 8], [1474, 708, 13, 11], [1518, 779, 32, 36], [1540, 810, 22, 26],
  [1174, 839, 18, 20], [1114, 869, 22, 34], [1338, 883, 40, 26], [1194, 933, 20, 26], [1311, 829, 17, 20],
  [1371, 836, 14, 18], [1434, 869, 16, 10], [1448, 822, 16, 12], [1488, 976, 50, 14], [1271, 976, 34, 30],
  [1160, 739, 14, 6], [1272, 865, 14, 14], [1087, 802, 13, 14], [1265, 745, 8, 10], [1094, 968, 14, 8],
  [1400, 670, 12, 14], [1365, 930, 26, 16],
];
function density(x: number, y: number) {
  let d = 0.006;
  if (x > 1071 && y > 640) d = 0.028 + Math.max(0, (860 - y) / 200) * 0.04;
  for (const p of patches) {
    const a = (x - p[0]) / p[2], b = (y - p[1]) / p[3], q = a * a + b * b;
    if (q < 5) d += p[4] * Math.exp(-q);
  }
  for (const p of parks) {
    const a = (x - p[0]) / p[2], b = (y - p[1]) / p[3], q = a * a + b * b;
    if (q < 3) d *= 1 - Math.exp(-q * q * 0.7) * 0.97;
  }
  return d;
}
function buildSpeckle() {
  const out: string[] = [];
  for (let y = MY; y < 1049; y++) {
    if (y > 200 && y < 652) continue;
    const x0 = y < 176 || y > 926 ? MX : 1066;
    let run = -1;
    for (let x = x0; x <= MR; x++) {
      let on = false;
      if (x < MR) {
        const n = noise(x / 14, y / 12, 3) * 0.5 + noise(x / 5, y / 5, 5) * 0.5;
        const f = noise(x / 1.7, y / 1.7, 9) * 0.6 + hash(x, y, 7) * 0.4;
        const p = density(x, y) * Math.pow(n * 2, 2.6);
        on = f > 0.93 - Math.min(0.58, Math.sqrt(p) * 0.6);
      }
      if (on && run < 0) run = x;
      if (!on && run >= 0) {
        out.push(`M${run - MX} ${y - MY + 0.5}h${x - run}`);
        run = -1;
      }
    }
  }
  return out.join("");
}
const speckle = buildSpeckle();

const MapCanvas = () => (
  <div className="flex flex-1 border-l border-t border-[#9a9a9a] bg-white">
    <svg width="1106" height="931" viewBox="0 0 1106 931" className="shrink-0" shapeRendering="crispEdges">
      <rect width="1106" height="931" fill="#279f2e" />
      <path d={speckle} stroke="#0009d8" strokeWidth="1" />
      <g transform="translate(-449 -118)" fill="#0009d8">
        <path d="M1232 650L1231 690L1229 712L1224 726C1219 738 1212 744 1199 745C1184 746 1172 743 1163 745C1150 748 1135 753 1124 757C1112 761 1109 766 1108 776L1105 797C1101 812 1094 819 1071 823" fill="none" stroke="#0009d8" strokeWidth="8" />
        <path d="M1436 650V690C1437 714 1453 733 1470 733C1490 732 1508 716 1506 698C1505 684 1492 680 1493 650" fill="none" stroke="#0009d8" strokeWidth="12" />
        <path d="M1334 650C1338 668 1350 673 1366 673C1382 672 1392 664 1400 650" fill="none" stroke="#0009d8" strokeWidth="9" />
        <path d="M1300 656H1345L1350 672L1325 664Z" fillOpacity=".55" />
        <path d="M1516 650H1555V694L1540 688L1528 674Z" />
        <path d="M1110 654C1114 668 1120 671 1144 673" fill="none" stroke="#0009d8" strokeWidth="3" />
        <circle cx="1092" cy="671" r="2.500" />
        <path d="M1128 826C1145 822 1160 816 1175 812M1146 788C1160 782 1172 776 1185 768" fill="none" stroke="#0009d8" strokeWidth="2" strokeDasharray="6 2" />
        <path d="M1172 884C1160 905 1148 930 1138 950M1129 962C1122 978 1112 998 1104 1010" fill="none" stroke="#0009d8" strokeWidth="2" strokeDasharray="5 3" />
        <path d="M1230 895L1224 925L1220 962" fill="none" stroke="#0009d8" strokeWidth="2" strokeDasharray="5 3" />
        <path d="M449 1007L466 989L503 993L517 1017L509 1042L477 1045L459 1032L449 1023Z" />
        <path d="M492 994v12l-1 8" stroke="#279f2e" fill="none" />
        <circle cx="618" cy="995" r="4.500" /><circle cx="640" cy="996" r="2.500" />
        <path d="M740 154L751 152L762 167L757 176H740Z" /><path d="M746 163l6 4" stroke="#279f2e" />
        <path d="M778 172L784 169L791 176H778Z" />
        <path d="M1439 117H1454V141L1438 138Z" />
        <path d="M1438 140L1454 143L1452 175L1448 181L1422 170Z" />
        <path d="M1420 176L1444 186L1443 199H1418Z" />
        <path d="M776 930L782 946L798 955C810 962 822 972 826 985C830 1000 822 1020 824 1049" fill="none" stroke="#0009d8" strokeWidth="1.500" />
        <path d="M608 1048C620 1040 628 1034 640 1035C655 1040 668 1040 676 1034C684 1026 694 1022 706 1023C722 1024 730 1034 742 1048" fill="none" stroke="#0009d8" strokeWidth="2" />
        <path d="M647 1020v10M652 1019v10M657 1021v9M664 1020v8M671 1020v6" stroke="#0009d8" strokeWidth="2.500" />
        <path d="M628 1043h10v5h-10zM644 1038h8v8h-8z" />
        <path d="M606 962L640 935M520 1048L586 988" stroke="#0009d8" strokeDasharray="4 3" />
      </g>
    </svg>
  </div>
);

/* ---------- reclassify dialog ---------- */

const field = "flex h-[24px] items-center rounded-[3px] border border-[#a9a9a9] pt-px text-[13px] text-[#1a1a1a]";
const Combo = ({ children, w }: Kids & { w: string }) => (
  <div className={`${field} ${w} justify-between bg-gradient-to-b from-white to-[#efefef] pl-[4px] pr-[7px]`}>
    <span className="flex items-center">{children}</span><span className="-mt-px flex"><Down /></span>
  </div>
);
const Dots = ({ h = "h-[20px]" }: { h?: string }) => (
  <div className={`flex ${h} w-[23px] items-center justify-center rounded-[3px] border border-[#ababab] bg-gradient-to-b from-white to-[#f1f1f1] text-[11px] leading-none text-[#222]`}>…</div>
);
const Label = ({ children, cls }: Kids & { cls: string }) => (
  <div className={`flex items-center whitespace-nowrap text-[13px] text-[#1a1a1a] ${cls}`}>{children}</div>
);
const Btn = ({ children, cls }: Kids & { cls: string }) => (
  <div className={`flex h-[24px] shrink-0 items-center justify-center whitespace-nowrap rounded-[3px] border text-[13px] ${cls}`}>{children}</div>
);
const normalBtn = "border-[#aaaaaa] bg-gradient-to-b from-white to-[#efefef] text-[#222]";

const ReclassifyDialog = () => (
  <div className="absolute left-[383px] top-[175px] flex h-[754px] w-[688px] flex-col overflow-hidden rounded-[10px] bg-[#ececec]">
    <div className="flex h-[29px] shrink-0 items-center border-b border-[#c2c2c2] bg-[#e3e3e3] pl-[8px] shadow-[inset_0_1px_0_#f5f5f5]">
      <div className="flex w-[52px] gap-[8px]">
        <span className="h-[12px] w-[12px] rounded-full border border-[#a9a9a9] bg-[#c3c3c3]" />
        <span className="h-[12px] w-[12px] rounded-full border border-[#a9a9a9] bg-[#c3c3c3]" />
        <span className="h-[12px] w-[12px] rounded-full border border-[#a9a9a9] bg-[#c3c3c3]" />
      </div>
      <div className="flex-1 pr-[60px] text-center text-[13px] font-bold tracking-normal text-[#9b9b9b]">Reclassify by Table</div>
    </div>
    <div className="flex h-[661px] shrink-0 pl-[11px] pt-[10px]">
      <div className="flex h-[621px] w-[543px] shrink-0 flex-col">
        <div className="flex h-[27px] shrink-0 items-end">
          <div className="z-10 -mb-px flex h-[28px] w-[95px] items-center justify-center rounded-t-[3px] border border-b-0 border-[#b0b0b0] bg-white text-[13px] text-[#222]">Parameters</div>
          <div className="-ml-px flex h-[25px] w-[47px] items-center justify-center rounded-tr-[3px] border border-b-0 border-[#b0b0b0] bg-[#e4e4e4] pt-[2px] text-[13px] text-[#222]">Log</div>
        </div>
        <div className="flex flex-1 flex-col border border-[#a9a9a9] bg-[#ebebeb] pl-[5px]">
          <Label cls="h-[26px] pt-[1px]">Raster layer</Label>
          <div className="flex gap-[6px]"><Combo w="w-[502px]"><span className="mx-[4px]"><Raster /></span>NDVI [EPSG:32630]</Combo><Dots /></div>
          <Label cls="h-[28px] pt-[2px]">Band number</Label>
          <Combo w="w-[531px]">Band 1 (Gray)</Combo>
          <Label cls="h-[28px] pt-[2px]">Reclassification table</Label>
          <div className="flex items-center gap-[6px]"><div className={`${field} w-[502px] bg-white pl-[3px] !text-[#bdbdbd]`}>Fixed table (5x3)</div><Dots /></div>
          <div className="flex h-[26px] shrink-0 items-center pl-[3px] pt-[5px] text-[13px] font-bold tracking-[0.050px] text-[#111]">
            <svg width="11" height="8" viewBox="0 0 11 8"><path d="M0 0h11L5.500 8z" fill="#333" /></svg><span className="ml-[8px]">Advanced Parameters</span>
          </div>
          <div className="ml-[1px] flex h-[202px] w-[530px] shrink-0 flex-col rounded-[2px] border border-[#cfcfcf] bg-[#e8e8e8] pl-[10px]">
            <Label cls="h-[33px] pt-[4px]">Output no data value</Label>
            <div className={`${field} !h-[23px] w-[507px] bg-white !pt-0 pl-[4px]`}>
              <span className="flex-1 pt-[2px]">-9999.000000</span>
              <span className="flex h-full w-[14px] flex-col items-center justify-center gap-[4px] border-l border-[#a9a9a9]">
                <svg width="7" height="4" viewBox="0 0 7 4"><path d="M0 4h7L3.500 0z" fill="#444" /></svg>
                <svg width="7" height="4" viewBox="0 0 7 4"><path d="M0 0h7L3.500 4z" fill="#444" /></svg>
              </span>
            </div>
            <Label cls="h-[29px] pt-[3px]">Range boundaries</Label>
            <Combo w="w-[507px]">min &lt;= value &lt; max</Combo>
            <Label cls="h-[35px]"><Check on={false} /><span className="ml-[5px] text-[#333]">Use no data when no range matches value</span></Label>
            <Label cls="h-[21px] pb-[5px]">Output data type</Label>
            <Combo w="w-[507px]">Int16</Combo>
          </div>
          <Label cls="h-[28px] pt-[1px]">Reclassified raster</Label>
          <div className="flex gap-[6px]">
            <div className={`${field} w-[502px] bg-white`}>
              <div className="flex w-[470px] justify-end overflow-hidden whitespace-nowrap tracking-[-0.140px]">aph/Documents/GIS/AdvancedGIS-2022/Session1/VegetationClassification.tif</div>
              <svg width="13" height="10" viewBox="0 0 13 10" fill="none" className="ml-[9px]"><path d="M0 5l4-5h9v10H4z" fill="#8a8a8a" /><path d="M5.500 2.500l5 5M10.500 2.500l-5 5" stroke="#fff" /></svg>
            </div>
            <div className="relative flex h-[24px] w-[23px] items-center justify-center rounded-[3px] border border-[#ababab] bg-gradient-to-b from-white to-[#f1f1f1] text-[11px] text-[#222]">…
              <svg width="6" height="4" viewBox="0 0 6 4" className="absolute bottom-[2px] right-[1px]"><path d="M0 0h6L3 4z" fill="#444" /></svg>
            </div>
          </div>
          <Label cls="h-[35px]"><Check /><span className="ml-[5px] text-[#333]">Open output file after running algorithm</span></Label>
        </div>
      </div>
      <div className="flex w-[16px] shrink-0 flex-col items-center pt-[2px]">
        <span className="mr-[5px] flex"><RightTri /></span>
        <div className="mt-[294px] h-[17px] w-px bg-[repeating-linear-gradient(180deg,#aaa_0_1px,transparent_1px_3px)]" />
      </div>
      <div className="flex h-[622px] w-[107px] shrink-0 flex-col overflow-hidden whitespace-nowrap border border-[#b3b3b3] bg-white pl-[4px] pt-[3px] text-[#5a5a5a]">
        <div className="h-[58px] text-[19px] font-bold leading-[25px] text-[#444]">Reclassify<br />by table</div>
        <div className="pt-[4px] text-[13px] leading-[16px]">This algorithm<br />reclassifies a<br />raster band by<br />assigning new<br />class values<br />based on the<br />ranges<br />specified in a<br />fixed table.</div>
      </div>
    </div>
    <div className="flex h-[24px] shrink-0 gap-[6px] pl-[11px]">
      <div className={`${field} w-[580px] justify-center bg-white !pt-0`}>0%</div>
      <Btn cls="w-[80px] border-[#c4c4c4] bg-[#f2f2f2] text-[#b4b4b4]">Cancel</Btn>
    </div>
    <div className="mt-[6px] flex gap-[6px] pl-[11px]">
      <Btn cls={`w-[80px] ${normalBtn}`}>Help</Btn>
      <Btn cls={`w-[150px] ${normalBtn}`}>Run as Batch Process…</Btn>
      <div className="w-[252px] shrink-0" />
      <Btn cls={`w-[80px] ${normalBtn}`}>Close</Btn>
      <Btn cls="w-[80px] border-[#5b9be6] bg-gradient-to-b from-white to-[#e4e8f0] text-[#222]">Run</Btn>
    </div>
  </div>
);

/* ---------- save dialog ---------- */

const side = { stroke: "#1070f0", strokeWidth: 1.2, fill: "none" };
const SideItem = ({ icon, t }: { icon: React.ReactNode; t: string }) => (
  <div className="flex h-[28px] shrink-0 items-center pl-[17px] text-[13px] text-[#3c3c3c]">
    <span className="flex w-[18px] shrink-0 justify-center">{icon}</span><span className="ml-[5px] whitespace-nowrap">{t}</span>
  </div>
);
const SideHead = ({ t, cls }: { t: string; cls: string }) => (
  <div className={`flex shrink-0 items-center pl-[16px] text-[11px] font-bold text-[#929292] ${cls}`}>{t}</div>
);
const Dot = ({ c }: { c: string }) => <span className={`h-[10px] w-[10px] rounded-full ${c}`} />;
const mac = "flex h-[22px] shrink-0 items-center rounded-[6px] border border-[#e2e2e2] border-b-[#bfbfbf] bg-white";
const Chev = ({ d, c = "#222", w = 1.6 }: { d: string; c?: string; w?: number }) => (
  <svg width="9" height="9" viewBox="0 0 9 9" fill="none"><path d={d} stroke={c} strokeWidth={w} strokeLinecap="round" /></svg>
);
const UpDown = () => (
  <span className="flex h-[16px] w-[16px] shrink-0 items-center justify-center rounded-[4px] bg-[#1180ff]">
    <svg width="8" height="11" viewBox="0 0 8 11" fill="none"><path d="M1 4l3-3 3 3M1 7l3 3 3-3" stroke="#fff" strokeWidth="1.500" strokeLinecap="round" /></svg>
  </span>
);
const BlueFolder = () => (
  <svg width="16" height="14" viewBox="0 0 16 14" className="shrink-0"><path d="M.5 1q0-1 1-1H6l1.500 1.500H15q1 0 1 1V13q0 1-1 1H1.500q-1 0-1-1z" fill="#2d9fd0" /><path d="M.5 4H16v9q0 1-1 1H1.500q-1 0-1-1z" fill="#62c6f2" /></svg>
);
const Tif = () => (
  <svg width="14" height="14" viewBox="0 0 14 14" className="shrink-0"><rect x=".5" y=".5" width="13" height="13" fill="#fff" stroke="#ddd" /><path d="M2 2h8v10H2z" fill="#7c7c7c" /><path d="M10 2h2v5l-2 2zM8 9l2 1v2H8z" fill="#555" /></svg>
);
const FileRow = ({ icon, t, on = false }: { icon: React.ReactNode; t: string; on?: boolean }) => (
  <div className={`flex h-[22px] shrink-0 items-center pl-[17px] text-[13px] ${on ? "text-[#1c1c1c]" : "text-[#bcbcbc]"}`}>
    <span className="flex w-[16px] justify-center">{icon}</span><span className="ml-[5px] whitespace-nowrap">{t}</span>
    {on && <span className="ml-[8px] flex"><Chev d="M3 1.500l3 3-3 3" c="#999" w={1.1} /></span>}
  </div>
);
const Gutter = ({ grip = false }: { grip?: boolean }) => (
  <div className="flex w-[15px] shrink-0 items-end justify-center border-x border-[#e3e3e3] bg-[#f9f9f9] pb-[4px]">
    {grip && <span className="h-[8px] w-[5px] border-x border-[#999]" />}
  </div>
);

const SaveDialog = () => (
  <div className="absolute left-[987px] top-[198px] flex h-[458px] w-[747px] overflow-hidden rounded-[10px] bg-white">
    <div className="flex w-[143px] shrink-0 bg-[linear-gradient(180deg,transparent_45%,#c0d0df_95%),linear-gradient(90deg,#dcdcdc_40%,#c4dcc4_85%)]">
      <div className="flex h-full w-[132px] flex-col bg-[linear-gradient(90deg,#dcdcdc_55%,transparent)]">
        <div className="flex h-[28px] shrink-0 items-center gap-[8px] pl-[8px]">
          <span className="h-[12px] w-[12px] rounded-full border border-[#a5a5a5] bg-[#bcbcbc]" />
          <span className="h-[12px] w-[12px] rounded-full border border-[#a5a5a5] bg-[#bcbcbc]" />
          <span className="h-[12px] w-[12px] rounded-full border border-[#1ba62e] bg-[#29c440]" />
        </div>
        <SideHead t="Favorites" cls="h-[30px] pt-[12px]" />
        <SideItem t="Macintos…" icon={<svg width="15" height="12" viewBox="0 0 15 12" {...side}><path d="M.8 6.500L3 1.500q.4-1 1.400-1h6.200q1 0 1.400 1l2.200 5v3q0 1.500-1.500 1.500H2.300Q.8 11 .8 9.500zM1 6.500h13M4 9h7" /></svg>} />
        <SideItem t="Applicati…" icon={<svg width="14" height="13" viewBox="0 0 14 13" {...side} strokeWidth={1.7}><path d="M8 .5L3 9M6 .5l6.500 11.500M.5 9H9M12 9h1.500M2.500 10L1.500 12" /></svg>} />
        <SideItem t="Desktop" icon={<svg width="15" height="12" viewBox="0 0 15 12" {...side}><rect x=".6" y=".6" width="13.800" height="10.800" rx="1.300" /><path d="M.6 3h13.800" /><path d="M3 9h9" strokeWidth="2" /></svg>} />
        <SideItem t="Documents" icon={<svg width="11" height="14" viewBox="0 0 11 14" {...side}><path d="M.6 2q0-1.400 1.400-1.400H6.500L10.400 4.500V12q0 1.400-1.400 1.400H2Q.6 13.400.6 12zM6.300.6v4.200h4.100" /></svg>} />
        <SideItem t="Downloads" icon={<svg width="14" height="14" viewBox="0 0 14 14" {...side}><circle cx="7" cy="7" r="6.300" /><path d="M7 3.500v6.500M4.500 7.800L7 10.200l2.500-2.400" /></svg>} />
        <SideHead t="iCloud" cls="h-[32px] pt-[15px]" />
        <SideItem t="iCloud Dri…" icon={<svg width="17" height="12" viewBox="0 0 17 12" fill="none" stroke="#1fa0b5" strokeWidth="1.200"><path d="M4 11.200a3.200 3.200 0 0 1-.5-6.200A4.500 4.500 0 0 1 12 3.500a3.900 3.900 0 0 1 .8 7.700z" /></svg>} />
        <SideItem t="Shared" icon={<svg width="17" height="13" viewBox="0 0 17 13" fill="none" stroke="#1fa0b5" strokeWidth="1.200"><path d="M10 2.500H6.500L5.500 1H1.500Q.6 1 .6 2v9q0 1.200 1.200 1.200h10.500q1.200 0 1.200-1.200V8M.6 5H10" /><circle cx="14" cy="3.500" r="2.300" fill="#1fa0b5" /></svg>} />
        <SideHead t="Tags" cls="h-[32px] pt-[14px]" />
        <SideItem t="Rouge" icon={<Dot c="bg-[#fb3b30]" />} />
        <SideItem t="Orange" icon={<Dot c="bg-[#e88007]" />} />
        <SideItem t="Jaune" icon={<Dot c="bg-[#e6b400]" />} />
        <SideItem t="Vert" icon={<Dot c="bg-[#14b52d]" />} />
        <SideItem t="Bleu" icon={<Dot c="bg-[#0a72f5]" />} />
      </div>
      <div className="mt-[31px] h-[348px] w-[8px] rounded-full bg-[#9aaea3]" />
    </div>
    <div className="flex flex-1 flex-col">
      <div className="flex h-[29px] shrink-0 items-center border-b border-[#d5d5d5] bg-[#f2f2f2] pl-[273px] text-[13px] font-bold tracking-normal text-[#3f3f3f]">Save file</div>
      <div className="mt-[8px] flex h-[25px] shrink-0 items-center">
        <span className="w-[176px] pt-px text-right text-[11px] tracking-[0.100px] text-[#7c7c7c]">Save As:</span>
        <div className="ml-[9px] flex h-[20px] w-[234px] items-center rounded-[5px] bg-white pl-[10px] text-[13px] text-[#2a2a2a] shadow-[0_0_0_3px_#7aa9f3]">VegetationClassification<span className="h-[17px] w-px bg-black" /></div>
      </div>
      <div className="mt-[8px] flex h-[22px] shrink-0 items-center">
        <span className="w-[176px] pt-[2px] text-right text-[11px] tracking-[0.100px] text-[#7c7c7c]">Tags:</span>
        <div className={`${mac} ml-[9px] w-[235px]`} />
      </div>
      <div className="mt-[20px] flex h-[22px] shrink-0 items-center pl-[20px]">
        <div className={`${mac} w-[24px] justify-center`}><Chev d="M6 1L2.500 4.500 6 8" c="#b5b5b5" w={1.2} /></div>
        <div className={`${mac} w-[25px] justify-center`}><Chev d="M3 1l3.500 3.500L3 8" c="#b5b5b5" w={1.2} /></div>
        <div className={`${mac} ml-[6px] w-[49px] justify-between pl-[10px] pr-[6px]`}><svg width="16" height="12" viewBox="0 0 16 12" fill="none" stroke="#333" strokeWidth="1.200"><rect x=".6" y=".6" width="14.800" height="10.800" rx="1.500" /><path d="M5.500 1v10M10.500 1v10" /></svg><Chev d="M1.500 3l3 3 3-3" /></div>
        <div className={`${mac} ml-[6px] w-[48px] justify-between pl-[10px] pr-[6px]`}><svg width="15" height="14" viewBox="0 0 15 14" fill="none" stroke="#333" strokeWidth="1.100"><path d="M0 .6h15M0 7.200h15" strokeWidth=".8" /><path d="M1 2.500h3v3H1zM6 2.500h3v3H6zM11 2.500h3v3h-3zM1 9.500h3v3H1zM6 9.500h3v3H6zM11 9.500h3v3h-3z" /></svg><Chev d="M1.500 3l3 3 3-3" /></div>
        <div className={`${mac} ml-[6px] w-[209px] pl-[8px] pr-[2px] text-[13px] text-[#222]`}><BlueFolder /><span className="ml-[4px] flex-1">Session1</span><UpDown /></div>
        <div className={`${mac} ml-[6px] w-[22px] justify-center`}><Chev d="M1.500 6l3-3 3 3" /></div>
        <div className={`${mac} ml-[7px] w-[156px] pl-[7px] text-[13px] text-[#bdbdbd]`}><svg width="13" height="13" viewBox="0 0 13 13" fill="none" stroke="#333" strokeWidth="1.300"><circle cx="5.300" cy="5.300" r="4.500" /><path d="M8.600 8.600l3.700 3.700" /></svg><span className="ml-[7px] pt-px">Search</span></div>
      </div>
      <div className="mt-[20px] flex h-[210px] shrink-0 border-y border-[#e0e0e0]">
        <div className="flex w-[231px] shrink-0 flex-col pt-[6px]">
          <FileRow t="Multiband-London.vrt" icon={<svg width="12" height="14" viewBox="0 0 12 14"><path d="M.5.5H8L11.500 4v9.500H.5z" fill="#f7f7f7" stroke="#e3e3e3" /><path d="M8 .5V4h3.500" fill="none" stroke="#ddd" /></svg>} />
          <FileRow t="NDVI.tif" icon={<Tif />} />
          <FileRow t="S2A_MSIL1C…30503.SAFE" on icon={<BlueFolder />} />
          <FileRow t="vegetation.tif" icon={<Tif />} />
        </div>
        <Gutter grip />
        <div className="w-[230px] shrink-0" />
        <Gutter />
      </div>
      <div className="flex h-[34px] shrink-0 items-center border-b border-[#e0e0e0] pb-[3px] pl-[178px]">
        <div className={`${mac} w-[246px] justify-between pl-[9px] pr-[2px] text-[13px] text-[#222]`}>TIF files (*.tif)<UpDown /></div>
      </div>
      <div className="mt-[19px] flex items-center pl-[20px] text-[13px] tracking-normal text-[#222]">
        <div className={`${mac} w-[92px] justify-center`}>New Folder</div>
        <div className={`${mac} ml-[319px] w-[74px] justify-center`}>Cancel</div>
        <div className="ml-[7px] flex h-[20px] w-[72px] items-center justify-center rounded-[5px] bg-gradient-to-b from-[#2a8dff] to-[#0070f8] font-medium text-white">Save</div>
      </div>
    </div>
  </div>
);

/* ---------- annotations drawn over the windows ---------- */

const ring = "absolute border-[5px] border-[#ae1800]";
const Annotations = () => (
  <>
    <div className={`${ring} left-[394px] top-[484px] h-[56px] w-[541px] rounded-[20px]`} />
    <div className={`${ring} left-[399px] top-[562px] h-[57px] w-[528px] rounded-[20px]`} />
    <div className={`${ring} left-[889px] top-[639px] h-[57px] w-[61px] rounded-[20px]`} />
    <div className={`${ring} left-[972px] top-[889px] h-[34px] w-[98px] rounded-[15px]`} />
    <div className={`${ring} left-[1303px] top-[221px] h-[48px] w-[251px] rounded-[21px]`} />
    <div className={`${ring} left-[1303px] top-[557px] h-[39px] w-[258px] rounded-[18px]`} />
    <div className={`${ring} left-[1634px] top-[605px] h-[45px] w-[96px] rounded-[21px]`} />
    <svg width="345" height="412" viewBox="945 260 345 412" className="absolute left-[945px] top-[260px]">
      <path d="M948 668L1268 282" stroke="#ae1800" strokeWidth="5.500" />
      <path d="M1283 263L1257.500 274.500L1277 290Z" fill="#ae1800" />
    </svg>
  </>
);

export default function App() {
  return (
    <div className="relative flex h-[1051px] w-[1914px] flex-col overflow-hidden bg-[#ececec] font-['Inter',sans-serif] tracking-[-0.060px] [font-feature-settings:'calt'_0]">
      <RowOne />
      <RowTwo />
      <RowThree />
      <div className="flex h-[933px] shrink-0 pt-[1px]">
        <div className="flex w-[442px] shrink-0 flex-col">
          <BrowserPanel />
          <LayersPanel />
        </div>
        <div className="w-[6px] shrink-0" />
        <div className="flex w-[1163px] shrink-0 border-r border-[#a9a9a9]"><MapCanvas /></div>
        <div className="w-[6px] shrink-0" />
        <ToolboxPanel />
      </div>
      <div className="h-[2px] border-t border-[#b5b5b5]" />
      <div className="absolute left-[383px] top-[175px] h-[754px] w-[688px] rounded-[10px] shadow-[0_0_0_1px_rgba(0,0,0,0.180),0_12px_30px_rgba(0,0,0,0.300)]" />
      <ReclassifyDialog />
      <div className="absolute left-[987px] top-[198px] h-[458px] w-[747px] rounded-[10px] shadow-[0_0_0_1px_rgba(0,0,0,0.200),0_16px_40px_rgba(0,0,0,0.500)]" />
      <SaveDialog />
      <Annotations />
    </div>
  );
}
